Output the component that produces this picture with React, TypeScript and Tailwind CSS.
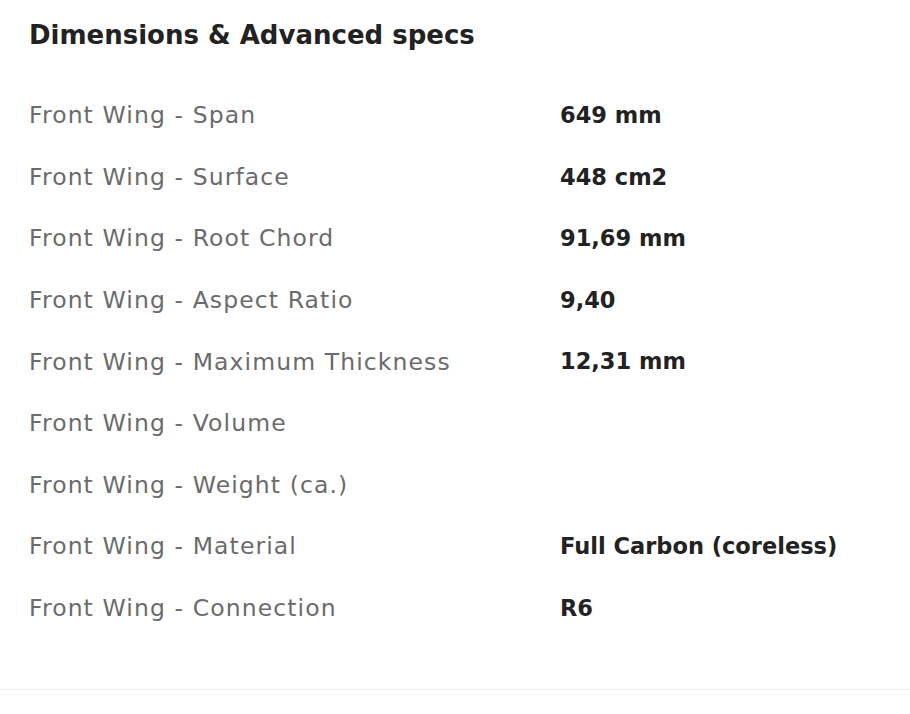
import React from "react";

const rows: [string, string][] = [
  ["Front Wing - Span", "649 mm"],
  ["Front Wing - Surface", "448 cm2"],
  ["Front Wing - Root Chord", "91,69 mm"],
  ["Front Wing - Aspect Ratio", "9,40"],
  ["Front Wing - Maximum Thickness", "12,31 mm"],
  ["Front Wing - Volume", ""],
  ["Front Wing - Weight (ca.)", ""],
  ["Front Wing - Material", "Full Carbon (coreless)"],
  ["Front Wing - Connection", "R6"],
];

export default function App() {
  return (
    <div className="w-[910px] h-[714px] bg-white" style={{ fontFamily: "'DejaVu Sans', sans-serif" }}>
      <div className="px-[29px] pt-[15px] pb-[50px] border-b border-[#eeeeee]">
        <h2 className="h-[40px] leading-[40px] text-[26px] font-bold text-[#222222]">
          Dimensions &amp; Advanced specs
        </h2>
        <div className="mt-[30px]">
          {rows.map(([label, value]) => (
            <div key={label} className="h-[61.6px] grid grid-cols-[531px_1fr] items-center">
              <div className="text-[23.5px] tracking-[1.1px] text-[#6b6b6b]">{label}</div>
              <div className="text-[22.5px] font-bold text-[#222222]">{value}</div>
            </div>
          ))}
        </div>
      </div>
    </div>
  );
}
